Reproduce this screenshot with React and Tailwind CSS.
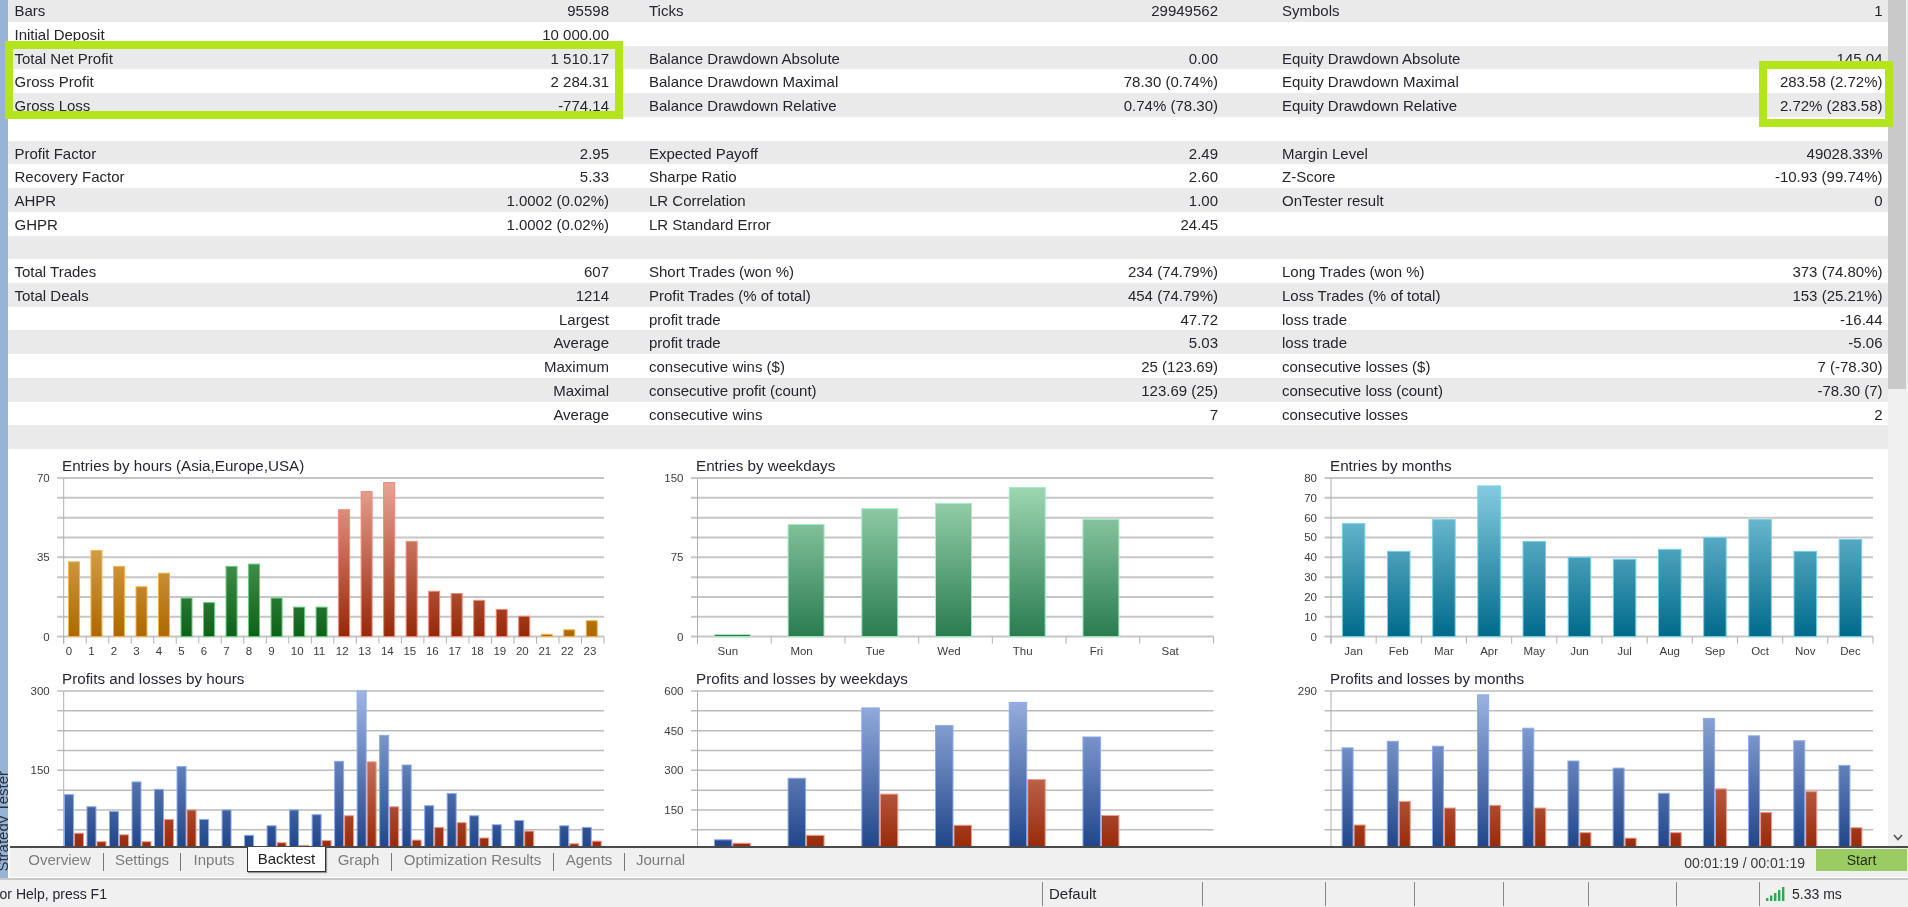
const stats = [
  [['Bars', '95598'], ['Ticks', '29949562'], ['Symbols', '1']],
  [['Initial Deposit', '10 000.00'], null, null],
  [['Total Net Profit', '1 510.17'], ['Balance Drawdown Absolute', '0.00'], ['Equity Drawdown Absolute', '145.04']],
  [['Gross Profit', '2 284.31'], ['Balance Drawdown Maximal', '78.30 (0.74%)'], ['Equity Drawdown Maximal', '283.58 (2.72%)']],
  [['Gross Loss', '-774.14'], ['Balance Drawdown Relative', '0.74% (78.30)'], ['Equity Drawdown Relative', '2.72% (283.58)']],
  [null, null, null],
  [['Profit Factor', '2.95'], ['Expected Payoff', '2.49'], ['Margin Level', '49028.33%']],
  [['Recovery Factor', '5.33'], ['Sharpe Ratio', '2.60'], ['Z-Score', '-10.93 (99.74%)']],
  [['AHPR', '1.0002 (0.02%)'], ['LR Correlation', '1.00'], ['OnTester result', '0']],
  [['GHPR', '1.0002 (0.02%)'], ['LR Standard Error', '24.45'], null],
  [null, null, null],
  [['Total Trades', '607'], ['Short Trades (won %)', '234 (74.79%)'], ['Long Trades (won %)', '373 (74.80%)']],
  [['Total Deals', '1214'], ['Profit Trades (% of total)', '454 (74.79%)'], ['Loss Trades (% of total)', '153 (25.21%)']],
  [['', 'Largest'], ['profit trade', '47.72'], ['loss trade', '-16.44']],
  [['', 'Average'], ['profit trade', '5.03'], ['loss trade', '-5.06']],
  [['', 'Maximum'], ['consecutive wins ($)', '25 (123.69)'], ['consecutive losses ($)', '7 (-78.30)']],
  [['', 'Maximal'], ['consecutive profit (count)', '123.69 (25)'], ['consecutive loss (count)', '-78.30 (7)']],
  [['', 'Average'], ['consecutive wins', '7'], ['consecutive losses', '2']],
  [null, null, null],
];

const colors = {
  orange: { top: '#f0c880', bottom: '#ad6800', edge: '#f2b452' },
  green: { top: '#7cc084', bottom: '#0c6118', edge: '#68cc78' },
  red: { top: '#eaa797', bottom: '#962808', edge: '#f08a78' },
  mint: { top: '#a4dcb8', bottom: '#2a7c50', edge: '#a4ecc4' },
  teal: { top: '#8cd0e4', bottom: '#006a8a', edge: '#6fd2ea' },
  blue: { top: '#9fb5e4', bottom: '#1e4488', edge: '#8aaaf0' },
  loss: { top: '#eaa797', bottom: '#962808', edge: '#f09a88' },
};

const hours = Array.from({ length: 24 }, (_, i) => String(i));
const days = ['Sun', 'Mon', 'Tue', 'Wed', 'Thu', 'Fri', 'Sat'];
const months = ['Jan', 'Feb', 'Mar', 'Apr', 'May', 'Jun', 'Jul', 'Aug', 'Sep', 'Oct', 'Nov', 'Dec'];

const hourColor = (i) => (i < 5 || i > 20 ? 'orange' : i < 12 ? 'green' : 'red');

const charts = [
  {
    id: 'eh', title: 'Entries by hours (Asia,Europe,USA)', pad: 'pl-[54px]', left: 55.7, right: 596, max: 70, barDx: -1,
    ticks: [[0, '70'], [4, '35'], [8, '0']], labels: hours, anchor: 'start', labelDx: 2, barW: 12,
    series: [{ values: [33, 38, 31, 22, 28, 17, 15, 31, 32, 17, 13, 13, 56, 64, 68, 42, 20, 19, 16, 12, 9, 1, 3, 7], color: hourColor }],
  },
  {
    id: 'ed', title: 'Entries by weekdays', pad: 'pl-[56px]', left: 57.5, right: 573.5, max: 150, barDx: -2,
    ticks: [[0, '150'], [4, '75'], [8, '0']], labels: days, anchor: 'middle', labelDx: -6.5, barW: 37,
    series: [{ values: [2, 106, 121, 126, 141, 111, 0], color: () => 'mint' }],
  },
  {
    id: 'em', title: 'Entries by months', pad: 'pl-[60px]', left: 61, right: 603, max: 80, barDx: 0,
    ticks: [[0, '80'], [1, '70'], [2, '60'], [3, '50'], [4, '40'], [5, '30'], [6, '20'], [7, '10'], [8, '0']],
    labels: months, anchor: 'middle', labelDx: 0, barW: 23.5,
    series: [{ values: [57, 43, 59, 76, 48, 40, 39, 44, 50, 59, 43, 49], color: () => 'teal' }],
  },
  {
    id: 'ph', title: 'Profits and losses by hours', pad: 'pl-[54px]', left: 55.7, right: 596, max: 300, barDx: -1,
    ticks: [[0, '300'], [4, '150'], [8, '0']], labels: [], barW: 10,
    series: [
      { values: [104, 81, 72, 128, 114, 157, 57, 75, 27, 45, 75, 66, 167, 300, 216, 160, 83, 106, 64, 47, 55, 0, 45, 42], color: () => 'blue' },
      { values: [31, 15, 28, 15, 57, 75, 0, 0, 0, 13, 8, 17, 64, 166, 81, 18, 42, 51, 22, 0, 35, 0, 11, 16], color: () => 'loss' },
    ],
  },
  {
    id: 'pd', title: 'Profits and losses by weekdays', pad: 'pl-[56px]', left: 57.5, right: 573.5, max: 600, barDx: -2,
    ticks: [[0, '600'], [2, '450'], [4, '300'], [6, '150'], [8, '0']], labels: [], barW: 18.5,
    series: [
      { values: [37, 270, 536, 469, 557, 426, 0], color: () => 'blue' },
      { values: [24, 54, 210, 92, 265, 129, 0], color: () => 'loss' },
    ],
  },
  {
    id: 'pm', title: 'Profits and losses by months', pad: 'pl-[60px]', left: 61, right: 603, max: 290, barDx: 0,
    ticks: [[0, '290'], [8, '0']], labels: [], barW: 12,
    series: [
      { values: [186, 198, 189, 283, 222, 162, 149, 103, 240, 208, 199, 154], color: () => 'blue' },
      { values: [45, 88, 76, 81, 76, 31, 21, 31, 111, 68, 106, 40], color: () => 'loss' },
    ],
  },
];

const tabs = [
  { name: 'Overview', w: 'w-[88px]', sep: true },
  { name: 'Settings', w: 'w-[77px]', sep: true },
  { name: 'Inputs', w: 'w-[66px]' },
  { name: 'Backtest', active: true },
  { name: 'Graph', w: 'w-[66px]', sep: true },
  { name: 'Optimization Results', w: 'w-[162px]', sep: true },
  { name: 'Agents', w: 'w-[71px]', sep: true },
  { name: 'Journal', w: 'w-[71px]' },
];

const statusCells = ['w-[160px]', 'w-[123px]', 'w-[89px]', 'w-[89px]', 'w-[85px]', 'w-[88px]', 'w-[83px]'];

const PLOT_TOP = 2;
const PLOT_H = 158.6;

const Chart = ({ chart }) => {
  const { id, title, pad, left, right, max, barDx, ticks, labels, anchor, labelDx, barW, series } = chart;
  const count = series[0].values.length;
  const slot = (right - left) / count;
  const baseline = PLOT_TOP + PLOT_H;
  const used = [...new Set(series.flatMap((s) => s.values.map((_, i) => s.color(i))))];
  const isEntries = labels.length > 0;

  return (
    <div className="h-[213.7px]">
      <div className={`h-[20px] leading-[20px] text-[15.2px] text-[#2a2438] whitespace-nowrap ${pad}`}>{title}</div>
      <svg width="100%" height="193.7" className="block overflow-visible" style={{ fontFamily: '"Liberation Sans", Arial, sans-serif' }}>
        <defs>
          {used.map((name) => (
            <linearGradient key={name} id={`${id}-${name}`} gradientUnits="userSpaceOnUse" x1="0" y1={PLOT_TOP} x2="0" y2={baseline}>
              <stop offset="0" stopColor={colors[name].top} />
              <stop offset="1" stopColor={colors[name].bottom} />
            </linearGradient>
          ))}
        </defs>
        {Array.from({ length: 9 }, (_, i) => (
          <line
            key={i}
            x1={left - 6.5}
            x2={right}
            y1={PLOT_TOP + (i * PLOT_H) / 8}
            y2={PLOT_TOP + (i * PLOT_H) / 8}
            stroke={isEntries ? '#c6c6c6' : '#bcbcbc'}
            strokeWidth={isEntries ? 2 : 1.5}
          />
        ))}
        <line x1={left} x2={left} y1={PLOT_TOP} y2={baseline + 7} stroke="#b0b0b0" />
        {isEntries && Array.from({ length: count + 1 }, (_, i) => (
          <line key={i} x1={left + i * slot} x2={left + i * slot} y1={baseline} y2={baseline + 7} stroke="#b0b0b0" />
        ))}
        {series.map((s, n) =>
          s.values.map((v, i) => {
            if (!v) return null;
            const h = (v / max) * PLOT_H;
            const groupW = barW * series.length;
            const x = left + i * slot + (slot - groupW) / 2 + n * barW + barDx;
            const name = s.color(i);
            return (
              <rect key={`${n}-${i}`} x={x + 0.5} y={baseline - h} width={barW - 1} height={h} fill={`url(#${id}-${name})`} stroke={colors[name].edge} strokeWidth="1" />
            );
          })
        )}
        {ticks.map(([i, text]) => (
          <text key={i} x={left - 14} y={PLOT_TOP + (i * PLOT_H) / 8 + 4} textAnchor="end" fontSize="11.5" fill="#3c3c3c">{text}</text>
        ))}
        {labels.map((text, i) => (
          <text
            key={text}
            x={anchor === 'start' ? left + i * slot + labelDx : left + (i + 0.5) * slot + labelDx}
            y={baseline + 18}
            textAnchor={anchor}
            fontSize="11.5"
            fill="#3c3c3c"
          >
            {text}
          </text>
        ))}
      </svg>
    </div>
  );
};

const StatCell = ({ cell, className }) => (
  <div className={`flex justify-between whitespace-nowrap ${className}`}>
    <span>{cell ? cell[0] : ''}</span>
    <span>{cell ? cell[1] : ''}</span>
  </div>
);

const App = () => {
  return (
    <div className="w-[1908px] h-[907px] overflow-hidden bg-white flex flex-col text-[#26242e] blur-[0.5px] font-['Liberation_Sans',Arial,sans-serif]">
      <div className="relative flex h-[878px]">
        {/* Strategy Tester side tab */}
        <div className="w-[8px] bg-[#97b4d6] overflow-hidden flex flex-col justify-end pb-[6px]">
          <div className="[writing-mode:vertical-rl] rotate-180 text-[15px] leading-[15px] -ml-[5px] text-[#2a3140] whitespace-nowrap">Strategy Tester</div>
        </div>

        <div className="flex-1 flex flex-col min-w-0">
          <div className="flex h-[847px] overflow-hidden">
            <div className="flex-1 min-w-0 overflow-hidden">
              {/* Results table */}
              <div className="-mt-[1.7px] text-[15px]">
                {stats.map((row, r) => (
                  <div key={r} className={`grid grid-cols-[641px_633px_1fr] h-[23.72px] leading-[25px] ${r % 2 === 0 ? 'bg-[#eaeaea]' : 'bg-white'}`}>
                    <StatCell cell={row[0]} className="pl-[6.5px] pr-[40px]" />
                    <StatCell cell={row[1]} className="pr-[64px]" />
                    <StatCell cell={row[2]} className="pr-[5.5px]" />
                  </div>
                ))}
              </div>

              {/* Charts */}
              <div className="grid grid-cols-[632px_630px_1fr] mt-[6.7px]">
                {charts.map((chart) => (
                  <Chart key={chart.id} chart={chart} />
                ))}
              </div>
            </div>

            {/* Scrollbar */}
            <div className="w-[20px] bg-[#f0f0f0] flex flex-col">
              <div className="w-[18px] h-[389px] bg-[#c9c9c9]" />
              <svg className="mt-auto mb-[6px] ml-[5px]" width="10" height="7" viewBox="0 0 10 7">
                <polyline points="1,1 5,5.5 9,1" fill="none" stroke="#555" strokeWidth="1.6" />
              </svg>
            </div>
          </div>

          {/* Tabs */}
          <div className="h-[31px] border-t-2 border-[#4a4a4a] ml-[2px] bg-[#f0f0f0] flex items-start pl-[6px] -mt-[1px]">
            {tabs.map((tab) =>
              tab.active ? (
                <div key={tab.name} className="w-[79px] h-[25px] -mt-[1px] bg-white border border-t-0 border-[#333] shadow-[1px_1px_1px_#999] flex items-center justify-center text-[15px] text-[#1e1e1e]">
                  {tab.name}
                </div>
              ) : (
                <div key={tab.name} className={`h-[18px] mt-[5px] leading-[13px] text-[15px] text-center text-[#7c7c7c] whitespace-nowrap ${tab.w} ${tab.sep ? 'border-r border-[#777]' : ''}`}>
                  {tab.name}
                </div>
              )
            )}
            <div className="ml-auto mt-[4px] h-[22px] leading-[22px] text-[14px] text-[#3a3a3a]">00:01:19 / 00:01:19</div>
            <div className="ml-[11px] mr-[1px] mt-[1px] w-[91px] h-[22px] bg-[#9bcb63] text-[14px] text-[#1e2a10] flex items-center justify-center">Start</div>
          </div>
        </div>

        {/* Highlight boxes */}
        <div className="absolute left-[5px] top-[41px] w-[618px] h-[78px] border-[8px] border-[#b2e61a]" />
        <div className="absolute left-[1759px] top-[61px] w-[134px] h-[66px] border-[8px] border-[#b2e61a]" />
      </div>

      {/* Status bar */}
      <div className="h-[29px] border-t-2 border-[#c8c8c8] bg-[#f0f0f0] flex text-[15px] pt-[2px] pb-[1px]">
        <div className="w-[1042px] overflow-hidden leading-[24px] whitespace-nowrap">
          <span className="block -ml-[9px] text-[14px]">For Help, press F1</span>
        </div>
        {statusCells.map((w, i) => (
          <div key={w + i} className={`${w} border-l border-[#888] leading-[24px] pl-[6px]`}>{i === 0 ? 'Default' : ''}</div>
        ))}
        <div className="flex-1 border-l border-[#888] flex items-center pl-[6px] gap-[7px] whitespace-nowrap">
          <svg width="19" height="14" viewBox="0 0 19 14">
            <rect x="0" y="11" width="2.4" height="3" fill="#2fa84f" />
            <rect x="4" y="8.5" width="2.4" height="5.5" fill="#2fa84f" />
            <rect x="8" y="6" width="2.4" height="8" fill="#2fa84f" />
            <rect x="12" y="3" width="2.4" height="11" fill="#2fa84f" />
            <rect x="16" y="0" width="2.4" height="14" fill="#2fa84f" />
          </svg>
          <span className="text-[14px]">5.33 ms</span>
        </div>
      </div>
    </div>
  );
};

export default App;
